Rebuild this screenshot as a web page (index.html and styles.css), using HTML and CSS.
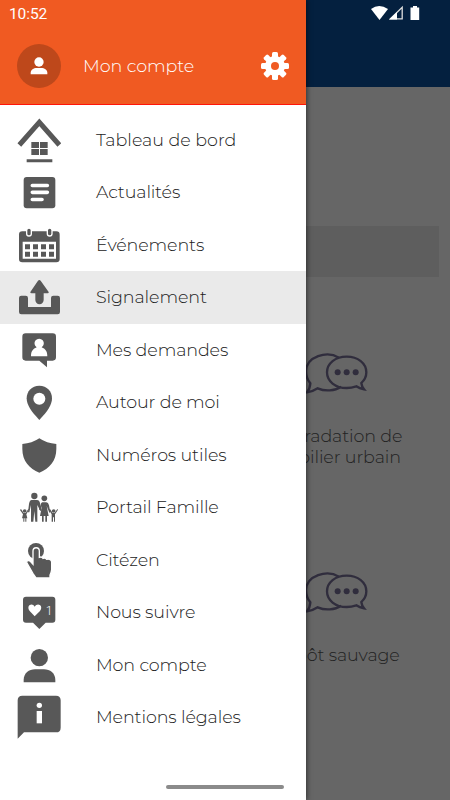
FILE: index.html
```
<!DOCTYPE html>
<html lang="fr">
<head>
    <meta charset="UTF-8">
    <meta name="viewport" content="width=device-width, initial-scale=1.0">
    <title>Signalement</title>
    <link rel="stylesheet" href="styles.css">
</head>
<body>
    <svg class="defs">
        <symbol id="chat" viewBox="0 0 192 132">
            <g fill="none" stroke="#302d3d" stroke-width="7" stroke-linejoin="miter">
                <path d="M105 17C68-5 8 14 6 57c0 16 5 28 13 37-1 12-4 20-10 27 12-1 23-6 32-12 23 10 51 8 70-5"/>
                <path d="M128 14c34 0 59 20 59 47 0 13-6 24-15 32 1 9 4 14 8 19-10-2-17-5-23-9-9 3-18 5-29 5-34 0-59-20-59-47s25-47 59-47z"/>
            </g>
            <g fill="#302d3d"><circle cx="101" cy="61" r="9"/><circle cx="128" cy="61" r="9"/><circle cx="155" cy="61" r="9"/></g>
        </symbol>
    </svg>

    <div class="page">
        <div class="topbar">
            <svg class="status" viewBox="0 0 50 16">
                <path fill="#fff" d="M0 4Q8-2 17 4L8.500 15z"/>
                <path fill="none" stroke="#ddd" stroke-width="1.300" d="M19.500 13.800L31.200 2.300V13.800z"/>
                <path fill="#fff" d="M18 14.500L26 7v7.500z"/>
                <path fill="#fff" d="M42 1h4v1.500h2.200V15h-8.700V2.500H42z"/>
            </svg>
        </div>
        <div class="search"></div>
        <div class="card">
            <svg class="chat"><use href="#chat"/></svg>
            <p>Dégradation de<br>mobilier urbain</p>
        </div>
        <div class="card">
            <svg class="chat"><use href="#chat"/></svg>
            <p>Dépôt sauvage</p>
        </div>
    </div>

    <div class="drawer">
        <div class="header">
            <div class="time">10:52</div>
            <div class="account">
                <div class="avatar">
                    <svg viewBox="0 0 54 54"><circle cx="27" cy="15" r="14"/><path d="M2 52v-5c0-8 9-14 18-14h14c9 0 18 6 18 14v5z"/></svg>
                </div>
                <span class="name">Mon compte</span>
                <svg class="gear" viewBox="-14 -14 28 28">
                    <g fill="#fff">
                        <circle r="10"/>
                        <rect x="-3" y="-14" width="6" height="28" rx="1.500"/>
                        <rect x="-3" y="-14" width="6" height="28" rx="1.500" transform="rotate(45)"/>
                        <rect x="-3" y="-14" width="6" height="28" rx="1.500" transform="rotate(90)"/>
                        <rect x="-3" y="-14" width="6" height="28" rx="1.500" transform="rotate(135)"/>
                    </g>
                    <circle r="4" fill="#f05a22"/>
                </svg>
            </div>
        </div>

        <ul class="menu">
            <li>
                <svg viewBox="0 0 132 157.5">
                    <path fill="none" stroke="#585858" stroke-width="15" d="M7 93L67 25l60 68"/>
                    <path d="M43 84h23v18H43zM69 84h23v18H69zM43 105h23v18H43zM69 105h23v18H69zM29 136h77v9H29z"/>
                </svg>
                <span>Tableau de bord</span>
            </li>
            <li>
                <svg viewBox="0 0 132 157.5">
                    <rect x="20" y="33" width="95" height="94" rx="9"/>
                    <path class="line" d="M46 58.500h45M46 79h45M46 100.500h29"/>
                </svg>
                <span>Actualités</span>
            </li>
            <li>
                <svg viewBox="0 0 132 157.5">
                    <rect x="6" y="37" width="122" height="93" rx="10"/>
                    <path class="w" d="M17 68h100v51H17z"/>
                    <path d="M24 76h15v15H24zM48 76h15v15H48zM72 76h15v15H72zM96 76h15v15H96zM24 98h15v15H24zM48 98h15v15H48zM72 98h15v15H72zM96 98h15v15H96z"/>
                    <g stroke="#fff" stroke-width="4"><rect x="29" y="27" width="14" height="24" rx="7"/><rect x="91" y="27" width="14" height="24" rx="7"/></g>
                </svg>
                <span>Événements</span>
            </li>
            <li class="active">
                <svg viewBox="0 0 132 157.5">
                    <path d="M13 74h13q7 0 7 7v27h69V81q0-7 7-7h13q7 0 7 7v42q0 7-7 7H13q-7 0-7-7V81q0-7 7-7z"/>
                    <path d="M63 29q4-4 8 0l24 34q1 4-3 4H80v20a12.500 12.500 0 0 1-25 0V67H44q-5 0-4-4z"/>
                </svg>
                <span>Signalement</span>
            </li>
            <li>
                <svg viewBox="0 0 132 157.5">
                    <path d="M26 28h81q10 0 10 10v62q0 10-10 10H90v20L67 110H26q-10 0-10-10V38q0-10 10-10z"/>
                    <path class="w" d="M42 97c0-16 6-22 17-27a14 14 0 1 1 15 0c11 5 17 11 17 27z"/>
                </svg>
                <span>Mes demandes</span>
            </li>
            <li>
                <svg viewBox="0 0 132 157.5">
                    <path d="M67 29c23 0 38 17 38 38 0 20-14 40-38 65C43 107 29 87 29 67c0-21 15-38 38-38z"/>
                    <circle class="w" cx="67" cy="68" r="18"/>
                </svg>
                <span>Autour de moi</span>
            </li>
            <li>
                <svg viewBox="0 0 132 157.5">
                    <path d="M67 28q22 15 51 17v15c0 36-21 59-51 71-30-12-51-35-51-71V45q29-2 51-17z"/>
                </svg>
                <span>Numéros utiles</span>
            </li>
            <li>
                <svg viewBox="0 0 132 157.5">
                    <circle cx="52" cy="45" r="9.500"/><circle cx="82" cy="52" r="8.500"/>
                    <circle cx="23" cy="90" r="5.500"/><circle cx="110" cy="90" r="5.500"/>
                    <path d="M44 57h16q7 0 9 9l5 22-4 2-9-18v50h-6l-3-32-3 32h-7V72l-5 22h-4l3-25q2-12 8-12z"/>
                    <path d="M76 64h12q6 0 8 9l4 21-3 1-8-20 6 30h-5v17h-5v-17h-5v17h-5v-17h-6l6-30-6 13-3-3 5-12q1-9 5-9z"/>
                    <path d="M12 84l8 12h6l8-12 2 2-8 14 3 12h-3v10h-3v-10h-3v10h-3v-10h-4l3-12-9-13zM99 84l8 12h6l8-12 2 2-9 14v22h-3v-13h-3v13h-4v-22l-8-14z"/>
                </svg>
                <span>Portail Famille</span>
            </li>
            <li>
                <svg viewBox="0 0 132 157.5">
                    <circle cx="57" cy="51" r="24"/>
                    <path stroke="#fff" stroke-width="4" d="M48 51c0-13 19-13 19 0v19q7-3 11 3 7-3 11 3c8-2 15 1 15 9v22q-1 10-5 16v9H57l-9-13-18-32c-3-7 5-10 10-5l8 9z"/>
                </svg>
                <span>Citézen</span>
            </li>
            <li>
                <svg viewBox="0 0 132 157.5">
                    <path d="M27 32h79q9 0 9 9v60q0 9-9 9H86l-19 19-19-19H27q-9 0-9-9V41q0-9 9-9z"/>
                    <path class="w" d="M53 91L38 75c-12-17 8-27 15-13 8-14 28-4 16 13z"/>
                    <text x="86" y="87">1</text>
                </svg>
                <span>Nous suivre</span>
            </li>
            <li>
                <svg viewBox="0 0 132 157.5">
                    <circle cx="67" cy="56" r="26"/>
                    <path d="M20 130v-7c0-20 16-32 34-32h27c18 0 34 12 34 32v7z"/>
                </svg>
                <span>Mon compte</span>
            </li>
            <li>
                <svg viewBox="0 0 132 157.5">
                    <path d="M16 14h101q14 0 14 14v82q0 14-14 14H21L2 143V28q0-14 14-14z"/>
                    <circle class="w" cx="67" cy="43" r="8"/><path class="w" d="M59 60h16v37H59z"/>
                </svg>
                <span>Mentions légales</span>
            </li>
        </ul>
    </div>
    <div class="home-bar"></div>
</body>
</html>
```
FILE: styles.css
```
* {
    box-sizing: border-box;
}
body {
    margin: 0;
    width: 450px;
    height: 800px;
    position: relative;
    overflow: hidden;
    font-family: Montserrat, Inter, sans-serif;
    font-weight: 300;
    background: #666;
}
.defs {
    position: absolute;
    width: 0;
    height: 0;
}
.topbar {
    height: 87px;
    background: #04203f;
    display: flex;
    justify-content: flex-end;
    padding: 5px 29px 0 0;
}
.status {
    width: 50px;
    height: 16px;
}
.search {
    height: 51px;
    margin: 139px 11px 0;
    background: #5e5e5e;
}
.card {
    width: 225px;
    height: 219px;
    margin-left: auto;
    display: flex;
    flex-direction: column;
    align-items: center;
}
.search + .card {
    margin-top: 75px;
}
.chat {
    width: 64px;
    height: 44px;
    margin-right: 4px;
    flex-shrink: 0;
}
.card p {
    margin: 29px 5px 0 0;
    font-size: 17.500px;
    line-height: 21px;
    letter-spacing: -0.120px;
    text-align: center;
    color: #222;
    white-space: nowrap;
}
.drawer {
    position: absolute;
    top: 0;
    left: 0;
    width: 306px;
    height: 800px;
    background: #fff;
    box-shadow: 1px 0 5px rgba(0, 0, 0, 0.5);
}
.header {
    height: 105px;
    background: #f05a22;
    border-bottom: 1px solid #ff1408;
    color: #fff;
}
.time {
    height: 44px;
    padding: 4px 0 0 9px;
    font: 400 15.500px/20px Roboto, sans-serif;
    letter-spacing: -0.100px;
}
.account {
    display: flex;
    align-items: center;
    padding: 0 17px 0 17px;
}
.avatar {
    width: 44px;
    height: 44px;
    border-radius: 50%;
    background: #be481b;
    display: flex;
    align-items: center;
    justify-content: center;
}
.avatar svg {
    width: 18px;
    height: 18px;
    fill: #fff;
}
.name {
    margin: -2px 0 0 22px;
    font-size: 17.500px;
    letter-spacing: -0.050px;
}
.gear {
    width: 28px;
    height: 28px;
    margin-left: auto;
}
.menu {
    list-style: none;
    margin: 0;
    padding: 8.500px 0 0;
}
.menu li {
    height: 52.500px;
    display: flex;
    align-items: center;
    padding-left: 17px;
    font-size: 17.500px;
    letter-spacing: -0.110px;
    color: #222;
}
.menu li:first-child {
    letter-spacing: 0;
}
.menu li.active {
    background: #eaeaea;
}
.menu span {
    margin-top: -1px;
}
.menu svg {
    width: 44px;
    height: 52.500px;
    margin-right: 35px;
    fill: #585858;
}
.menu .w,
.menu text {
    fill: #fff;
}
.menu text {
    font: 300 36px Roboto, sans-serif;
}
.menu .line {
    stroke: #fff;
    stroke-width: 11;
    stroke-linecap: round;
}
.home-bar {
    position: absolute;
    left: 166px;
    bottom: 11px;
    width: 118px;
    height: 4px;
    border-radius: 2px;
    background: #8b8b8b;
}
```
